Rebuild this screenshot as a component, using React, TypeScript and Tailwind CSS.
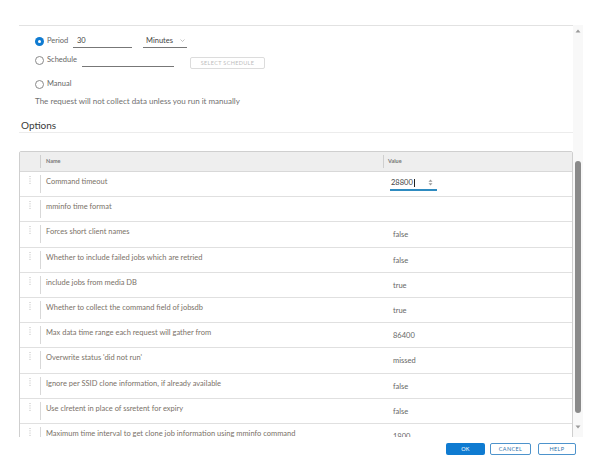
import React from 'react';

const FONT = { fontFamily: 'Lato, "Open Sans", "Liberation Sans", sans-serif' };

const rows: { name: string; value: string; input?: boolean }[] = [
  { name: 'Command timeout', value: '28800', input: true },
  { name: 'mminfo time format', value: '' },
  { name: 'Forces short client names', value: 'false' },
  { name: 'Whether to include failed jobs which are retried', value: 'false' },
  { name: 'include jobs from media DB', value: 'true' },
  { name: 'Whether to collect the command field of jobsdb', value: 'true' },
  { name: 'Max data time range each request will gather from', value: '86400' },
  { name: "Overwrite status 'did not run'", value: 'missed' },
  { name: 'Ignore per SSID clone information, if already available', value: 'false' },
  { name: 'Use clretent in place of ssretent for expiry', value: 'false' },
  { name: 'Maximum time interval to get clone job information using mminfo command', value: '1800' },
];

function Radio({ checked }: { checked?: boolean }) {
  return checked ? (
    <span className="w-[9px] h-[9px] rounded-full bg-[#0f7bd1] flex items-center justify-center">
      <span className="w-[3px] h-[3px] rounded-full bg-white" />
    </span>
  ) : (
    <span className="w-[9px] h-[9px] rounded-full border border-[#8a8a8a] bg-white" />
  );
}

function DragDots() {
  return (
    <svg width="2" height="8" viewBox="0 0 2 8" className="text-[#bdbdbd]">
      <rect x="0.5" y="0" width="1" height="1" fill="currentColor" />
      <rect x="0.5" y="2.3" width="1" height="1" fill="currentColor" />
      <rect x="0.5" y="4.6" width="1" height="1" fill="currentColor" />
      <rect x="0.5" y="6.9" width="1" height="1" fill="currentColor" />
    </svg>
  );
}

function Spinner() {
  return (
    <svg width="5" height="7" viewBox="0 0 5 7" className="text-[#999]">
      <path d="M2.5 0.5 L4.5 2.8 L0.5 2.8 Z" fill="currentColor" />
      <path d="M2.5 6.5 L4.5 4.2 L0.5 4.2 Z" fill="currentColor" />
    </svg>
  );
}

export default function App() {
  return (
    <div className="w-[597px] h-[472px] bg-white flex flex-col text-[#666]" style={FONT}>
      <div className="h-[25px]" />

      <div className="flex h-[412px] pl-[19px]">
        {/* scrolled content */}
        <div className="w-[554px] h-[412px] overflow-hidden flex flex-col border-t border-[#e2e2e2]">
          <div className="flex flex-col pl-[16px] text-[7.5px]">
            <div className="mt-[8px] h-[14px] flex items-center">
              <Radio checked />
              <span className="ml-[3px] w-[26px]">Period</span>
              <div className="w-[59px] h-[14px] border-b border-[#777] flex items-center pl-[4px] text-[#444]">30</div>
              <div className="ml-[11px] w-[44px] h-[13px] border-b border-[#777] flex items-center justify-between pl-[3px] pr-[2px] text-[#444]">
                <span>Minutes</span>
                <svg width="5" height="3" viewBox="0 0 5 3">
                  <path d="M0.5 0.5 L2.5 2.5 L4.5 0.5" stroke="#aaa" strokeWidth="0.7" fill="none" />
                </svg>
              </div>
            </div>

            <div className="mt-[5px] h-[14px] flex items-center">
              <Radio />
              <span className="ml-[3px] w-[35px]">Schedule</span>
              <div className="w-[92px] h-[14px] border-b border-[#777]" />
              <div className="ml-[16px] mt-[6px] w-[75px] h-[12px] border border-[#dcdcdc] rounded-[2px] flex items-center justify-center text-[5.5px] tracking-[0.06em] text-[#bdbdbd]">
                SELECT SCHEDULE
              </div>
            </div>

            <div className="mt-[10px] h-[14px] flex items-center">
              <Radio />
              <span className="ml-[3px]">Manual</span>
            </div>

            <div className="mt-[4px] h-[12px] flex items-center text-[8px] text-[#707070]">
              The request will not collect data unless you run it manually
            </div>
          </div>

          <div className="mt-[11px] h-[16px] border-b border-[#ececec] pl-[2px] flex items-start text-[10px] text-[#3a3a3a] leading-[14px]">
            Options
          </div>

          {/* table */}
          <div className="mt-[18px] border border-[#cfcfcf] rounded-t-[2px] flex flex-col">
            <div className="h-[20px] shrink-0 bg-[#eeeeee] border-b border-[#d8d8d8] flex items-center text-[5.5px] font-bold text-[#777]">
              <div className="w-[20px]" />
              <div className="w-[343px] flex items-center">
                <span className="w-px h-[13px] bg-[#cfcfcf]" />
                <span className="ml-[5px]">Name</span>
              </div>
              <div className="flex items-center">
                <span className="w-px h-[13px] bg-[#cfcfcf]" />
                <span className="ml-[4px]">Value</span>
              </div>
            </div>

            {rows.map((r) => (
              <div key={r.name} className="h-[25.2px] shrink-0 border-b border-[#e0e0e0] flex text-[7.5px]">
                <div className="w-[20px] flex justify-center pt-[4px]">
                  <DragDots />
                </div>
                <div className="w-[343px] flex">
                  <span className="w-px h-[18px] mt-[3px] bg-[#d8d8d8]" />
                  <span className="ml-[5px] pt-[5px] leading-[10px] text-[#7a7168]">{r.name}</span>
                </div>
                {r.input ? (
                  <div className="pl-[7px] pt-[4px]">
                    <div className="w-[47px] h-[15px] border-b-2 border-[#2e8bc0] flex items-center justify-between pl-[1px] pr-[4px] text-[#444]">
                      <span className="flex items-center">
                        28800
                        <span className="ml-[1px] w-px h-[8px] bg-[#222]" />
                      </span>
                      <Spinner />
                    </div>
                  </div>
                ) : (
                  <div className="pl-[10px] pt-[8px] leading-[10px] text-[#666]">{r.value}</div>
                )}
              </div>
            ))}
          </div>
        </div>

        {/* scrollbar */}
        <div className="w-[10px] h-[412px] bg-[#f8f8f8] flex flex-col items-center">
          <div className="h-[12px] flex items-center">
            <svg width="6" height="4" viewBox="0 0 6 4">
              <path d="M3 0.5 L5.5 3.5 L0.5 3.5 Z" fill="#9a9a9a" />
            </svg>
          </div>
          <div className="mt-[124px] w-[6px] h-[252px] rounded-[3px] bg-[#8a8a8a]" />
          <div className="mt-[8px] h-[12px] flex items-center">
            <svg width="6" height="4" viewBox="0 0 6 4">
              <path d="M3 3.5 L5.5 0.5 L0.5 0.5 Z" fill="#9a9a9a" />
            </svg>
          </div>
        </div>
      </div>

      {/* footer */}
      <div className="mt-[6px] flex justify-end pr-[21px] text-[5.5px] tracking-[0.06em]">
        <button className="w-[39px] h-[12px] rounded-[2px] bg-[#0f7bd1] text-white flex items-center justify-center">OK</button>
        <button className="ml-[5px] w-[41px] h-[12px] rounded-[2px] border border-[#4d93cc] text-[#2f72ab] bg-white flex items-center justify-center">CANCEL</button>
        <button className="ml-[7px] w-[38px] h-[12px] rounded-[2px] border border-[#4d93cc] text-[#2f72ab] bg-white flex items-center justify-center">HELP</button>
      </div>
    </div>
  );
}
